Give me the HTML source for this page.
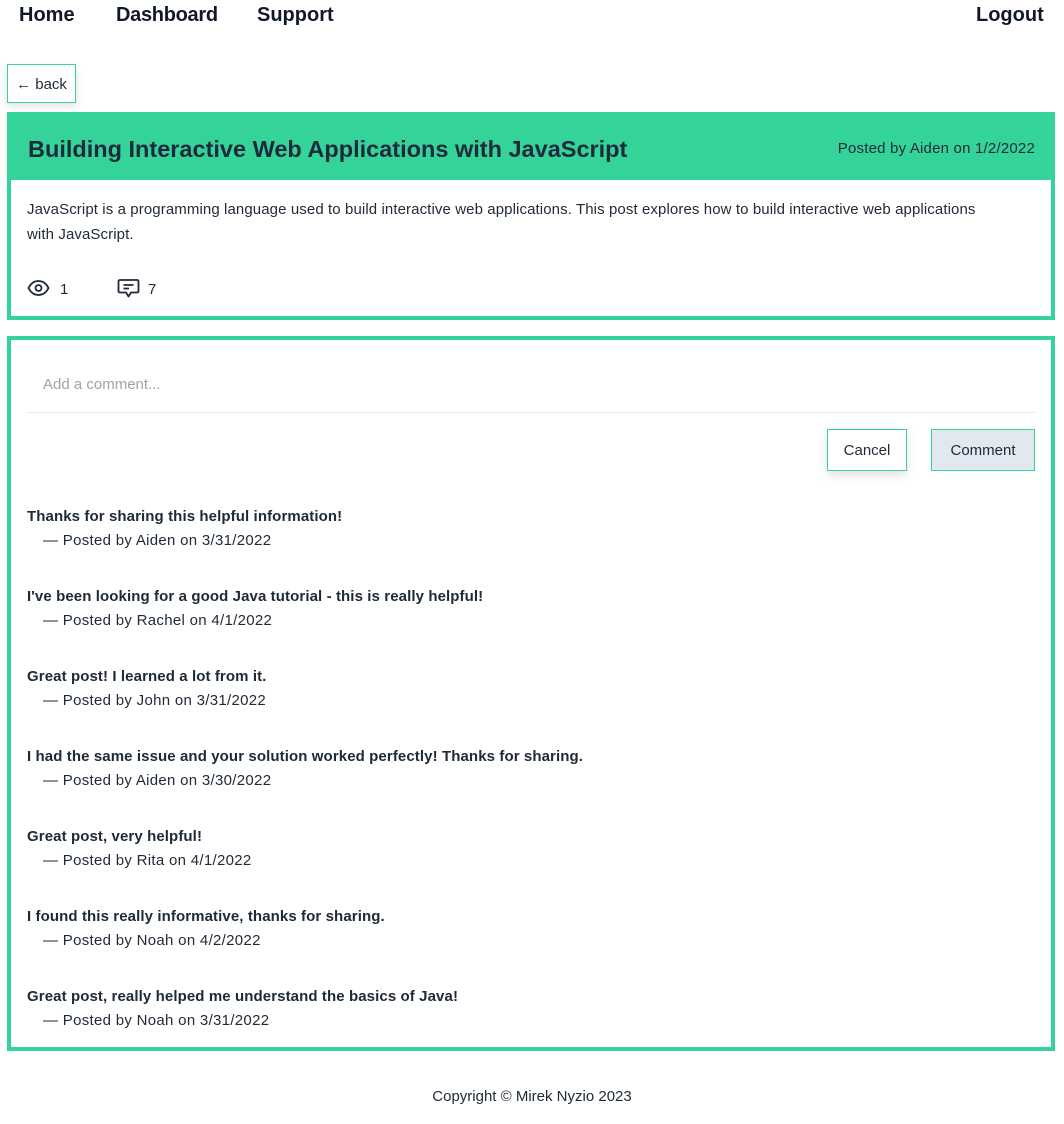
<!DOCTYPE html>
<html><head><meta charset="utf-8"><style>
*{margin:0;padding:0;box-sizing:border-box}
body{width:1064px;height:1124px;background:#fff;font-family:"Liberation Sans",sans-serif;color:#1f2937;position:relative;overflow:hidden}
.a{position:absolute;white-space:nowrap}
.nav{font-weight:bold;font-size:20px;top:4px;color:#111827}
.box{position:absolute;border:4px solid #34d399}
.c{font-size:15px;font-weight:bold;color:#1f2937;letter-spacing:0.1px}
.m{font-size:15px;color:#1f2937;letter-spacing:0.3px}
</style></head><body>
<div class="a nav" style="left:19px">Home</div>
<div class="a nav" style="left:116px;letter-spacing:-0.3px">Dashboard</div>
<div class="a nav" style="left:257px">Support</div>
<div class="a nav" style="left:976px">Logout</div>

<div class="a" style="left:7px;top:64px;width:69px;height:39px;border:1px solid #34d399;box-shadow:0 3px 8px rgba(0,0,0,.12);font-size:15px;line-height:39px;text-align:center;color:#1f2937">← back</div>

<div class="box" style="left:7px;top:112px;width:1048px;height:208px;border-top:none"></div>
<div class="a" style="left:7px;top:112px;width:1048px;height:68px;background:#34d399"></div>
<div class="a" style="left:28px;top:136px;font-size:23.5px;font-weight:bold;color:#1e293b">Building Interactive Web Applications with JavaScript</div>
<div class="a" style="right:29px;top:140px;font-size:15px;color:#1f2937;letter-spacing:0.2px">Posted by Aiden on 1/2/2022</div>
<div class="a" style="left:27px;top:197px;font-size:15px;line-height:25px;white-space:normal;width:970px;letter-spacing:0.1px">JavaScript is a programming language used to build interactive web applications. This post explores how to build interactive web applications with JavaScript.</div>
<svg class="a" style="left:27px;top:278px" width="23" height="20" viewBox="0 0 23 20" fill="none" stroke="#1f2937" stroke-width="1.8"><path d="M1.5 10C4 5 7.5 3 11.5 3S19 5 21.5 10C19 15 15.5 17 11.5 17S4 15 1.5 10Z"/><circle cx="11.5" cy="10" r="3"/></svg>
<div class="a" style="left:60px;top:281px;font-size:15px">1</div>
<svg class="a" style="left:117px;top:278px" width="23" height="22" viewBox="0 0 23 22" fill="none" stroke="#1f2937" stroke-width="1.8" stroke-linejoin="round"><path d="M3 2H20Q21.5 2 21.5 3.5V13Q21.5 14.5 20 14.5H14L11.5 18.5L9 14.5H3Q1.5 14.5 1.5 13V3.5Q1.5 2 3 2Z"/><path d="M6.5 7H16.5M6.5 10.5H12"/></svg>
<div class="a" style="left:148px;top:281px;font-size:15px">7</div>

<div class="box" style="left:7px;top:336px;width:1048px;height:715px"></div>
<div class="a" style="left:43px;top:376px;font-size:15px;color:#9ca3af">Add a comment...</div>
<div class="a" style="left:27px;top:412px;width:1008px;height:1px;background:#e5e7eb"></div>
<div class="a" style="left:827px;top:429px;width:80px;height:42px;border:1px solid #34d399;box-shadow:0 4px 10px rgba(0,0,0,.12);font-size:15px;line-height:42px;text-align:center">Cancel</div>
<div class="a" style="left:931px;top:429px;width:104px;height:42px;border:1px solid #34d399;background:#e2e8f0;font-size:15px;line-height:42px;text-align:center">Comment</div>

<div class="a c" style="left:27px;top:508px">Thanks for sharing this helpful information!</div>
<div class="a m" style="left:43px;top:532px">— Posted by Aiden on 3/31/2022</div>
<div class="a c" style="left:27px;top:588px">I've been looking for a good Java tutorial - this is really helpful!</div>
<div class="a m" style="left:43px;top:612px">— Posted by Rachel on 4/1/2022</div>
<div class="a c" style="left:27px;top:668px">Great post! I learned a lot from it.</div>
<div class="a m" style="left:43px;top:692px">— Posted by John on 3/31/2022</div>
<div class="a c" style="left:27px;top:748px">I had the same issue and your solution worked perfectly! Thanks for sharing.</div>
<div class="a m" style="left:43px;top:772px">— Posted by Aiden on 3/30/2022</div>
<div class="a c" style="left:27px;top:828px">Great post, very helpful!</div>
<div class="a m" style="left:43px;top:852px">— Posted by Rita on 4/1/2022</div>
<div class="a c" style="left:27px;top:908px">I found this really informative, thanks for sharing.</div>
<div class="a m" style="left:43px;top:932px">— Posted by Noah on 4/2/2022</div>
<div class="a c" style="left:27px;top:988px">Great post, really helped me understand the basics of Java!</div>
<div class="a m" style="left:43px;top:1012px">— Posted by Noah on 3/31/2022</div>

<div class="a" style="left:0;width:1064px;text-align:center;top:1088px;font-size:15px">Copyright © Mirek Nyzio 2023</div>
</body></html>
